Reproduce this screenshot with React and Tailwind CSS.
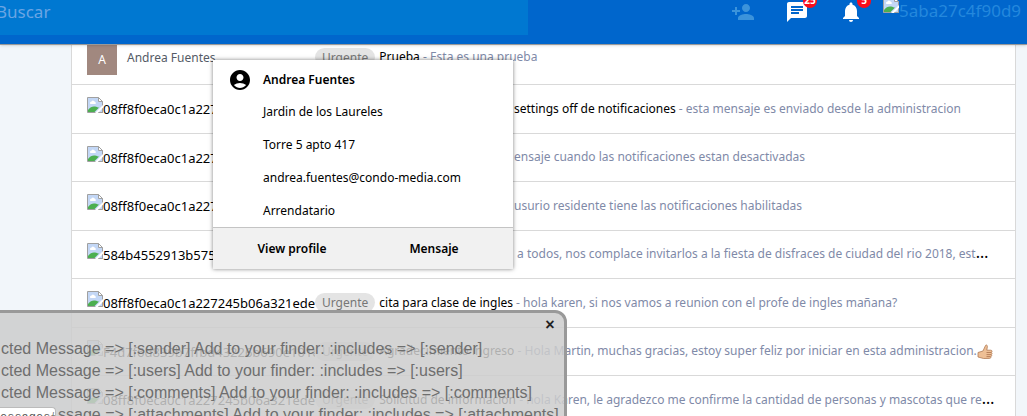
import { MdPersonAdd, MdChat, MdNotifications, MdAccountCircle } from 'react-icons/md';

const HASH = '08ff8f0eca0c1a227245b06a321ede9b';

const messages = [
  { image: HASH, covered: 'Prueba con los', subject: 'settings off de notificaciones', body: 'esta mensaje es enviado desde la administracion' },
  { image: HASH, covered: 'Prueba - este m', body: 'ensaje cuando las notificaciones estan desactivadas' },
  { image: HASH, covered: 'Prueba - este', body: 'usurio residente tiene las notificaciones habilitadas' },
  { image: '584b4552913b575d8a4b3c21', covered: 'Fiesta - Hola', body: '\u00a0a todos, nos complace invitarlos a la fiesta de disfraces de ciudad del rio 2018, est', cut: true },
  { image: HASH, urgent: true, subject: 'cita para clase de ingles', body: 'hola karen, si nos vamos a reunion con el profe de ingles mañana?' },
  { image: 'F4d7f6d839b7ffbd43226b690e101ef4', urgent: true, subject: 'Agradecimiento ingreso', body: 'Hola Martin, muchas gracias, estoy super feliz por iniciar en esta administracion.', thumb: true },
  { image: HASH, urgent: true, subject: 'Solicitud de información', body: 'hola Karen, le agradezco me confirme la cantidad de personas y mascotas que re', cut: true },
];

const warnings = ['sender', 'users', 'comments', 'attachments'];

function BrokenImage() {
  return (
    <svg viewBox="0 0 16 16" className="size-4 shrink-0" aria-hidden="true">
      <path d="M.5.5h11l4 4v11H.5z" fill="#c3d7f6" stroke="#a0a0a0" />
      <path d="M11.5.5v4h4z" fill="#fff" stroke="#a0a0a0" />
      <path d="M3 6a1.5 1.5 0 0 1 1.5-1.6A2 2 0 0 1 8 5a1.2 1.2 0 0 1 .5 2H3.5A1 1 0 0 1 3 6z" fill="#fff" />
      <path d="M1 15v-2c2-3 5-4 7-3.500s3 1 4 1L7.500 15z" fill="#4caf50" />
      <path d="M8 16 16 8v3l-5 5z" fill="#fff" />
      <path d="M11.500 15.500h4v-4" fill="none" stroke="#a0a0a0" />
    </svg>
  );
}

function ThumbsUp() {
  return (
    <svg viewBox="0 0 16 16" className="inline size-4" role="img" aria-label="thumbs up">
      <path d="M1 8.500 6 7l2.500-5.500C9 .5 10.500 1 10.400 2.500L9.800 6.200h4c1.500 0 1.700 1.800.6 2.200 1 .5.8 1.900-.1 2.200.7.600.4 1.800-.5 2 .4.900-.2 1.700-1.200 1.800l-6 .1L1 13z" fill="#eebf95" stroke="#b07a54" strokeWidth=".8" />
      <path d="M9.500 8.500h4.500M9.500 10.600h4.500M9.500 12.600h4" stroke="#a9714c" strokeWidth=".8" />
    </svg>
  );
}

function Urgent() {
  return <span className="mr-1 shrink-0 rounded-full bg-[#e4e4e4] px-[7px] text-xs leading-[19px] text-[#777]">Urgente</span>;
}

function MessageRow({ message }) {
  return (
    <li className="flex h-12 items-center border-b border-[#d9d9d9] pl-[15px] whitespace-nowrap odd:h-[49px]">
      <div className="flex w-[228px] shrink-0 items-start overflow-hidden pb-1 text-black">
        <BrokenImage />
        <span className="pt-1 text-[13px] leading-4">{message.image}</span>
      </div>
      <div className="flex min-w-0 flex-1 items-center overflow-hidden pb-px">
        {message.urgent && <Urgent />}
        {message.covered && <span className="w-[199px] shrink-0 overflow-hidden pl-16 text-black">{message.covered}</span>}
        <p className="leading-5 text-[#7f8aa8]">
          {message.subject && <><span className="text-black">{message.subject}</span> - </>}
          {message.body}
          {message.cut && <span className="text-base leading-4 text-black">…</span>}
          {message.thumb && <ThumbsUp />}
        </p>
      </div>
    </li>
  );
}

function Badge({ children }) {
  return (
    <span className="absolute -top-[6px] left-[18px] flex size-[14px] items-center justify-center rounded-full bg-[#fb0d1b] text-[10px] font-bold text-white">
      {children}
    </span>
  );
}

function Header() {
  return (
    <header className="relative z-10 flex h-[45px] items-start overflow-hidden border-b border-[#999] bg-[#0066cc] shadow">
      <input
        type="search"
        aria-label="Buscar"
        placeholder="Buscar"
        className="-ml-1 h-[35px] w-[532px] bg-[#0078d1] pb-3 text-[17px] text-white outline-none placeholder:text-[#6aa5e4]"
      />
      <nav className="ml-auto flex shrink-0 items-start">
        <button aria-label="Agregar persona" className="mr-[30px] text-[#3b93db]"><MdPersonAdd size={24} /></button>
        <button aria-label="Mensajes" className="relative mr-[30px] text-white"><MdChat size={24} /><Badge>25</Badge></button>
        <button aria-label="Notificaciones" className="relative mr-5 text-white"><MdNotifications size={24} /><Badge>5</Badge></button>
        <a href="#perfil" className="-mt-[3px] flex w-36 overflow-hidden text-[17px] text-[#2488dd]">
          <BrokenImage /><span className="pt-1 leading-5">5aba27c4f90d9</span>
        </a>
      </nav>
    </header>
  );
}

function ContactCard() {
  return (
    <section className="absolute top-[60px] left-[213px] z-20 w-[300px] bg-white text-black shadow-[0_0_4px_rgba(0,0,0,0.5)]">
      <div className="flex h-[35px] items-center gap-[11px] pt-1 pl-[15px]">
        <MdAccountCircle size={24} />
        <h2 className="font-semibold">Andrea Fuentes</h2>
      </div>
      <ul className="pl-[50px] leading-[33px]">
        <li>Jardin de los Laureles</li>
        <li>Torre 5 apto 417</li>
        <li>andrea.fuentes@condo-media.com</li>
        <li>Arrendatario</li>
      </ul>
      <footer className="flex h-[42px] border-t border-[#c4c4c4] bg-[#f1f1f1] px-2">
        <button className="flex-1 font-semibold">View profile</button>
        <button className="flex-1 font-semibold">Mensaje</button>
      </footer>
    </section>
  );
}

function WarningPanel() {
  return (
    <aside className="absolute top-[310px] -left-3 z-30 h-40 w-[579px] overflow-hidden rounded-xl border-[3px] border-[#999] bg-[#cccccc]/85 pl-[10px] font-['Liberation_Sans',sans-serif] text-base text-[#6e6e6e]">
      <button aria-label="Cerrar" className="mr-[6px] ml-auto block h-[25px] w-4 pb-1 text-base font-bold text-[#222]">×</button>
      {warnings.map((name) => (
        <p key={name} className={name === 'attachments' ? 'pl-[57px] leading-[22px] whitespace-nowrap' : 'leading-[22px] whitespace-nowrap'}>
          {name === 'attachments' ? 'ssage' : 'cted Message'} =&gt; [:{name}] Add to your finder: :includes =&gt; [:{name}]
        </p>
      ))}
    </aside>
  );
}

export default function App() {
  return (
    <div className="relative h-screen overflow-hidden bg-[#f2f6fa] font-['Noto_Sans',sans-serif] text-xs">
      <Header />
      <main className="-mt-[9px] mr-[11px] ml-[71px] border-x border-[#d9d9d9] bg-white">
        <div className="flex h-[49px] items-center border-b border-[#d9d9d9] pl-[15px]">
          <span className="mr-[10px] flex size-[30px] items-center justify-center bg-[#a1887f] text-white">A</span>
          <span className="w-[188px] pb-1 text-[#555b66]">Andrea Fuentes</span>
          <div className="flex items-center pb-[6px]">
            <Urgent />
            <p className="text-[#7f8aa8]"><span className="text-black">Prueba</span> - Esta es una prueba</p>
          </div>
        </div>
        <ul>
          {messages.map((message, i) => <MessageRow key={i} message={message} />)}
        </ul>
      </main>
      <ContactCard />
      <WarningPanel />
      <div className="absolute top-[407px] left-0 z-40 h-8 w-14 overflow-hidden rounded-tr border-t border-r border-[#bbb] bg-white font-['Liberation_Mono',monospace] leading-5 text-[#555]">essages#</div>
    </div>
  );
}
